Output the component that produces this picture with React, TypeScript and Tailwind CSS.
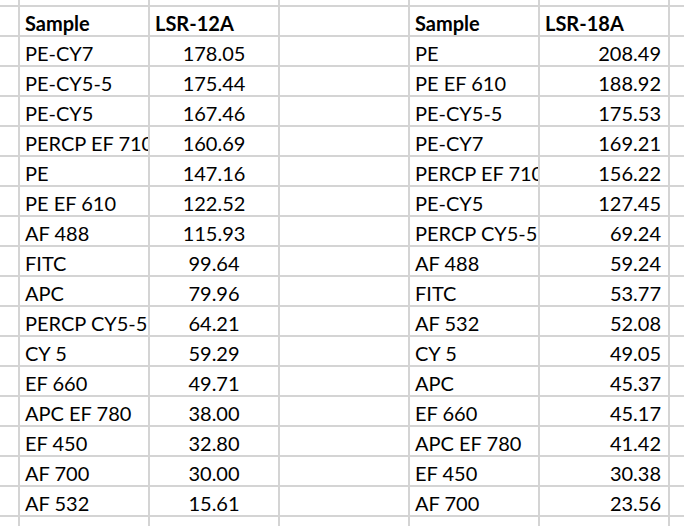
const left: [string, string][] = [
  ["PE-CY7", "178.05"],
  ["PE-CY5-5", "175.44"],
  ["PE-CY5", "167.46"],
  ["PERCP EF 710", "160.69"],
  ["PE", "147.16"],
  ["PE EF 610", "122.52"],
  ["AF 488", "115.93"],
  ["FITC", "99.64"],
  ["APC", "79.96"],
  ["PERCP CY5-5", "64.21"],
  ["CY 5", "59.29"],
  ["EF 660", "49.71"],
  ["APC EF 780", "38.00"],
  ["EF 450", "32.80"],
  ["AF 700", "30.00"],
  ["AF 532", "15.61"],
];

const right: [string, string][] = [
  ["PE", "208.49"],
  ["PE EF 610", "188.92"],
  ["PE-CY5-5", "175.53"],
  ["PE-CY7", "169.21"],
  ["PERCP EF 710", "156.22"],
  ["PE-CY5", "127.45"],
  ["PERCP CY5-5", "69.24"],
  ["AF 488", "59.24"],
  ["FITC", "53.77"],
  ["AF 532", "52.08"],
  ["CY 5", "49.05"],
  ["APC", "45.37"],
  ["EF 660", "45.17"],
  ["APC EF 780", "41.42"],
  ["EF 450", "30.38"],
  ["AF 700", "23.56"],
];

type Cell = { text?: string; align?: "left" | "center" | "right"; bold?: boolean };

function Empty() {
  return <div className="bg-white" />;
}

function TextCell({ text, align = "left", bold }: Cell) {
  const alignCls =
    align === "center" ? "text-center" : align === "right" ? "text-right pr-[7px]" : "text-left pl-[5px]";
  return (
    <div
      className={`bg-white overflow-hidden whitespace-nowrap pt-[4px] leading-[24px] text-[20px] text-black ${alignCls} ${
        bold ? "font-bold" : ""
      }`}
    >
      {text}
    </div>
  );
}

export default function App() {
  // rows: header + 16 data rows
  const rows: Cell[][] = [
    [
      { text: "Sample", bold: true },
      { text: "LSR-12A", bold: true },
      {},
      { text: "Sample", bold: true },
      { text: "LSR-18A", bold: true },
    ],
    ...left.map(([name, val], i) => [
      { text: name },
      { text: val, align: "center" as const },
      {},
      { text: right[i][0] },
      { text: right[i][1], align: "right" as const },
    ]),
  ];

  return (
    <div
      className="grid h-screen w-full gap-[2px] bg-[#d4d4d4] grid-cols-[18px_repeat(5,128px)_1fr] grid-rows-[5px_repeat(17,28px)_1fr]"
      style={{ fontFamily: 'Lato, "Liberation Sans", Arial, sans-serif' }}
    >
      {/* top partial row */}
      {Array.from({ length: 7 }).map((_, i) => (
        <Empty key={`t${i}`} />
      ))}
      {rows.map((r, ri) => (
        <>
          <Empty key={`l${ri}`} />
          {r.map((c, ci) =>
            c.text ? <TextCell key={`${ri}-${ci}`} {...c} /> : <Empty key={`${ri}-${ci}`} />
          )}
          <Empty key={`r${ri}`} />
        </>
      ))}
      {/* bottom partial row */}
      {Array.from({ length: 7 }).map((_, i) => (
        <Empty key={`b${i}`} />
      ))}
    </div>
  );
}
